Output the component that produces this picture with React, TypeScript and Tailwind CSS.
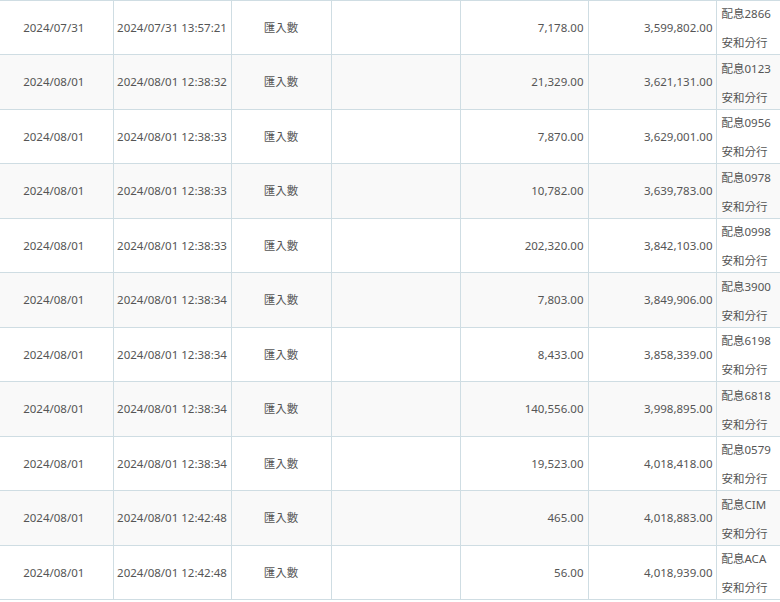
const rows = [
  { d: "2024/07/31", t: "2024/07/31 13:57:21", amt: "7,178.00", bal: "3,599,802.00", memo: "配息2866" },
  { d: "2024/08/01", t: "2024/08/01 12:38:32", amt: "21,329.00", bal: "3,621,131.00", memo: "配息0123" },
  { d: "2024/08/01", t: "2024/08/01 12:38:33", amt: "7,870.00", bal: "3,629,001.00", memo: "配息0956" },
  { d: "2024/08/01", t: "2024/08/01 12:38:33", amt: "10,782.00", bal: "3,639,783.00", memo: "配息0978" },
  { d: "2024/08/01", t: "2024/08/01 12:38:33", amt: "202,320.00", bal: "3,842,103.00", memo: "配息0998" },
  { d: "2024/08/01", t: "2024/08/01 12:38:34", amt: "7,803.00", bal: "3,849,906.00", memo: "配息3900" },
  { d: "2024/08/01", t: "2024/08/01 12:38:34", amt: "8,433.00", bal: "3,858,339.00", memo: "配息6198" },
  { d: "2024/08/01", t: "2024/08/01 12:38:34", amt: "140,556.00", bal: "3,998,895.00", memo: "配息6818" },
  { d: "2024/08/01", t: "2024/08/01 12:38:34", amt: "19,523.00", bal: "4,018,418.00", memo: "配息0579" },
  { d: "2024/08/01", t: "2024/08/01 12:42:48", amt: "465.00", bal: "4,018,883.00", memo: "配息CIM" },
  { d: "2024/08/01", t: "2024/08/01 12:42:48", amt: "56.00", bal: "4,018,939.00", memo: "配息ACA" },
];

export default function App() {
  return (
    <div
      className="w-[780px] h-[602px] overflow-hidden bg-white text-[#555] text-[11.5px]"
      style={{ fontFamily: '"Segoe UI", "Noto Sans", "Noto Sans CJK TC", sans-serif' }}
    >
      <table className="ml-[-5px] mt-[-0.5px] w-[811px] table-fixed border-collapse border-t border-[#cfdde3]">
        <colgroup>
          <col className="w-[118px]" />
          <col className="w-[118px]" />
          <col className="w-[100px]" />
          <col className="w-[129px]" />
          <col className="w-[128px]" />
          <col className="w-[128px]" />
          <col className="w-[90px]" />
        </colgroup>
        <tbody>
          {rows.map((r, i) => (
            <tr
              key={i}
              className={`h-[53.5px] border-b border-[#cfdde3] ${i % 2 === 1 ? "bg-[#f9f9f9]" : "bg-white"}`}
            >
              <td className="text-center p-0 whitespace-nowrap">{r.d}</td>
              <td className="text-center p-0 border-l border-[#cfdde3] whitespace-nowrap">{r.t}</td>
              <td className="text-center p-0 border-l border-[#cfdde3]">匯入數</td>
              <td className="p-0 border-l border-[#cfdde3]"></td>
              <td className="text-right p-0 pr-[4px] border-l border-[#cfdde3] whitespace-nowrap">{r.amt}</td>
              <td className="text-right p-0 pr-[3px] border-l border-[#cfdde3] whitespace-nowrap">{r.bal}</td>
              <td className="p-0 pl-[5px] border-l border-[#cfdde3] whitespace-nowrap align-top">
                <div className="h-[53.5px] pt-[2.5px]">
                  <div className="leading-[22px]">{r.memo}</div>
                  <div className="leading-[22px] mt-[7px]">安和分行</div>
                </div>
              </td>
            </tr>
          ))}
        </tbody>
      </table>
    </div>
  );
}
